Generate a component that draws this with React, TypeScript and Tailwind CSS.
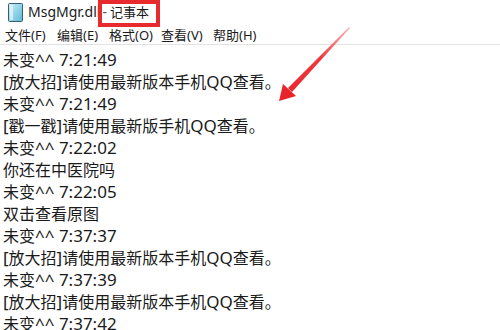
const lines = [
  "未变^^ 7:21:49",
  "[放大招]请使用最新版本手机QQ查看。",
  "未变^^ 7:21:49",
  "[戳一戳]请使用最新版手机QQ查看。",
  "未变^^ 7:22:02",
  "你还在中医院吗",
  "未变^^ 7:22:05",
  "双击查看原图",
  "未变^^ 7:37:37",
  "[放大招]请使用最新版本手机QQ查看。",
  "未变^^ 7:37:39",
  "[放大招]请使用最新版本手机QQ查看。",
  "未变^^ 7:37:42",
];

const menus = ["文件(F)", "编辑(E)", "格式(O)", "查看(V)", "帮助(H)"];

const font = "font-['Segoe_UI','Noto_Sans','Noto_Sans_CJK_SC',sans-serif]";

// Latin runs render a touch larger than CJK, like Microsoft YaHei does
function Line({ text }: { text: string }) {
  const parts = text.split(/([\x00-\x7F]+)/).filter(Boolean);
  return (
    <div>
      {parts.map((p, i) =>
        /^[\x00-\x7F]+$/.test(p) ? (
          <span key={i} className="text-[17px] whitespace-pre">{p}</span>
        ) : (
          <span key={i}>{p}</span>
        )
      )}
    </div>
  );
}

function NotepadIcon() {
  return (
    <svg width="15" height="19" viewBox="0 0 15 19">
      <defs>
        <linearGradient id="np" x1="0" y1="0" x2="1" y2="1">
          <stop offset="0" stopColor="#c9eef7" />
          <stop offset="1" stopColor="#5cb9d8" />
        </linearGradient>
      </defs>
      <rect x="0.5" y="0.5" width="14" height="18" rx="1" fill="url(#np)" stroke="#3a5f72" />
      <rect x="2" y="2" width="3" height="15" fill="#e9f8fc" opacity="0.7" />
    </svg>
  );
}

export default function App() {
  return (
    <div className={`relative w-[500px] h-[330px] overflow-hidden bg-white text-[#1a1a1a] ${font}`}>
      <div className="flex items-center h-[24px] pl-[8px]">
        <NotepadIcon />
        <span className="ml-[5px] text-[14px] leading-none">MsgMgr.dll</span>
        <span className="ml-[2px] text-[14px] leading-none text-[#555]">-</span>
        <span className="ml-[3px] text-[13px] leading-none">记事本</span>
      </div>
      <div className="flex items-center h-[21px] pt-[3px] pl-[5px] text-[13px] border-b border-[#e3e3e3]">
        {menus.map((m) => (
          <span key={m} className="w-[52px] shrink-0 whitespace-nowrap">{m}</span>
        ))}
      </div>
      <div className="pt-[4px] pl-[3px] text-[16px] leading-[22px] whitespace-nowrap">
        {lines.map((l, i) => (
          <Line key={i} text={l} />
        ))}
      </div>

      {/* annotation: red box around title */}
      <div className="absolute left-[98px] top-0 w-[62px] h-[27px] border-4 border-[#e62a2e]" />

      {/* annotation: arrow */}
      <svg className="absolute left-0 top-0" width="500" height="330" viewBox="0 0 500 330">
        <defs>
          <linearGradient id="ar" x1="349" y1="27" x2="279" y2="101" gradientUnits="userSpaceOnUse">
            <stop offset="0" stopColor="#f06a6e" stopOpacity="0.5" />
            <stop offset="0.4" stopColor="#ec3a40" />
            <stop offset="1" stopColor="#e8242b" />
          </linearGradient>
        </defs>
        <polygon points="349,27 350,28 292,92 288,88" fill="url(#ar)" />
        <polygon points="279,101 283,84 296,96" fill="#e8242b" />
      </svg>
    </div>
  );
}
